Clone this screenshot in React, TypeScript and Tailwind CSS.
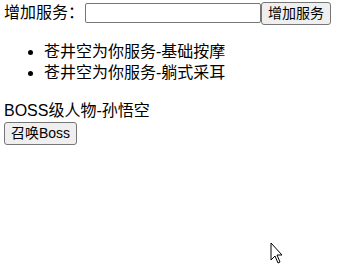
import React from 'react';

const cjk = { fontFamily: '"Liberation Sans", "Noto Sans CJK SC", sans-serif' };

export default function App() {
    return (
        <div className="relative h-[265px] w-[345px] overflow-hidden bg-white pl-1 pt-px text-black" style={cjk}>
            <div className="flex h-[24px] items-center text-[16px]">
                <span className="leading-[20px]">增加服务：</span>
                <input
                    type="text"
                    className="ml-[1px] h-[20px] w-[176px] rounded-[2px] border border-[#767676] bg-white px-[2px] text-[13px] outline-none"
                />
                <button className="h-[23px] rounded-[3px] border border-[#767676] bg-[#efefef] px-[6px] text-[14px] leading-[16px]">
                    增加服务
                </button>
            </div>
            <ul className="my-[16px] list-disc pl-[40px] text-[16px] leading-[21px]">
                <li>苍井空为你服务-基础按摩</li>
                <li>苍井空为你服务-躺式采耳</li>
            </ul>
            <div className="mt-[18px] text-[16px] leading-[20px]">BOSS级人物-孙悟空</div>
            <button className="h-[23px] rounded-[3px] border border-[#767676] bg-[#efefef] px-[6px] text-[14px] leading-[16px]">
                召唤Boss
            </button>
            <svg className="absolute left-[270px] top-[242px]" width="14" height="24" viewBox="0 0 14 24">
                <path d="M1 1 L1 18 L5 14 L8 21 L10 20 L7 13 L12 13 Z" fill="#fff" stroke="#000" strokeWidth="1" />
            </svg>
        </div>
    );
}
